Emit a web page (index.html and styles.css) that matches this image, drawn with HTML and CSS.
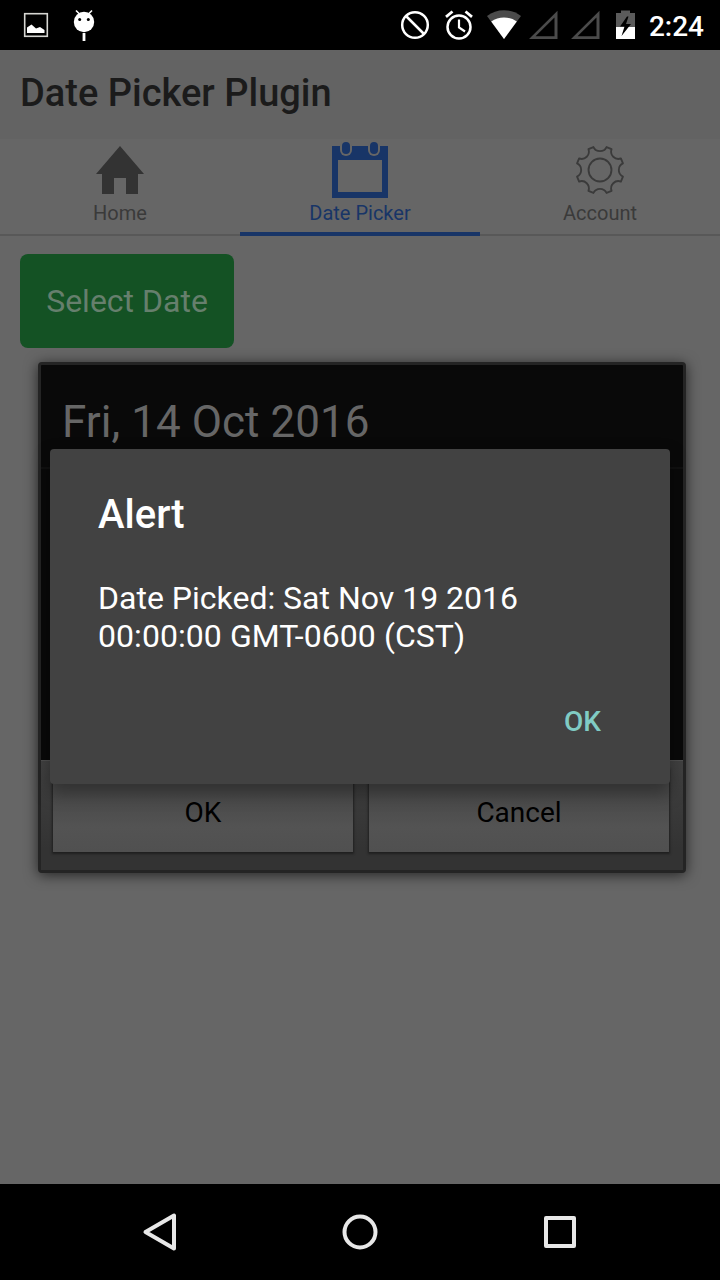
FILE: index.html
```html
<!DOCTYPE html>
<html lang="en">
<head>
<meta charset="utf-8">
<title>Date Picker Plugin</title>
<link rel="stylesheet" href="styles.css">
</head>
<body>
<div class="screen">
  <div class="status">
    <svg class="status-left" width="80" height="50" viewBox="20 0 80 50">
      <rect x="24.7" y="13.7" width="22.6" height="22.6" fill="none" stroke="#d6d6d2" stroke-width="1.6"/>
      <path d="M27 33v-5.500l4.500-3 4.500 4 4-1.500 4.500 3v3z" fill="#fff"/>
      <path d="M76 10.500l4 4M92 10.500l-4 4" stroke="#fff" stroke-width="1.600"/>
      <circle cx="84" cy="22" r="10.200" fill="#fff"/>
      <circle cx="79.700" cy="19.500" r="1.500"/><circle cx="88.300" cy="19.500" r="1.500"/>
      <path d="M84 33v8" stroke="#fff" stroke-width="2.800"/>
    </svg>
    <svg class="status-right" width="240" height="50" viewBox="400 0 240 50">
      <g fill="none" stroke="#fff" stroke-width="2.500">
        <circle cx="415" cy="25" r="12.800"/>
        <path d="M406 16l18 18"/>
        <circle cx="459" cy="27" r="11.500"/>
        <path d="M459 19.500v8l6 4" stroke-width="2.200"/>
        <path d="M446 16.800l6.500-5.300M472 16.800l-6.500-5.300" stroke-width="2.800"/>
      </g>
      <path d="M487 16a28 28 0 0 1 34 0l-17 23z" fill="#4b4b4b"/>
      <path d="M491.200 21.500a22 22 0 0 1 25.600 0L504 39z" fill="#fff"/>
      <path d="M529 39L557.500 10.800V39zM535.500 36.300h19V17.400zM571 39L599.500 10.800V39zM577.500 36.300h19V17.400z" fill="#4b4b4b" fill-rule="evenodd"/>
      <path d="M616 13h5v-2.500h9V13h5v14h-19z" fill="#5b5b5b"/>
      <path d="M616 27h19v12h-19z" fill="#fff"/>
      <path d="M627 16.500l-7 10h4.500l-3 9.500 9.500-12h-5l2.500-7.500z" fill="#000"/>
    </svg>
    <span class="clock">2:24</span>
  </div>
  <header class="header"><h1 class="title">Date Picker Plugin</h1></header>
  <nav class="tabs">
    <div class="tab">
      <svg class="tab-icon" width="60" height="60" viewBox="0 0 60 60"><path d="M30 6L54 34h-6v20H36V38H24v16H12V34H6z" fill="#333"/></svg>
      <span class="tab-label">Home</span>
    </div>
    <div class="tab tab-active">
      <svg class="tab-icon" width="60" height="60" viewBox="0 0 60 60">
        <path d="M2 6h56v52H2zM8 20v32h44V20z" fill="#183567" fill-rule="evenodd"/>
        <rect x="10" y="0" width="12" height="16" rx="6" fill="#666"/><rect x="38" y="0" width="12" height="16" rx="6" fill="#666"/>
        <rect x="12" y="2" width="8" height="12" rx="4" fill="#183567"/><rect x="40" y="2" width="8" height="12" rx="4" fill="#183567"/>
      </svg>
      <span class="tab-label">Date Picker</span>
    </div>
    <div class="tab">
      <svg class="tab-icon" width="60" height="60" viewBox="-29.3 -29.3 58.600 58.600">
        <g fill="none" stroke="#3a3a3a" stroke-width="1.800" stroke-linejoin="round">
          <circle r="11.200"/>
          <path d="M-6.400-22.400A7.100 7.100 0 0 0 6.400-22.400L11.300-20.400A7.100 7.100 0 0 0 20.400-11.300L22.400-6.400A7.100 7.100 0 0 0 22.400 6.400L20.400 11.300A7.100 7.100 0 0 0 11.300 20.400L6.400 22.400A7.100 7.100 0 0 0-6.400 22.400L-11.300 20.400A7.100 7.100 0 0 0-20.400 11.300L-22.400 6.400A7.100 7.100 0 0 0-22.400-6.400L-20.400-11.300A7.100 7.100 0 0 0-11.300-20.400z"/>
        </g>
      </svg>
      <span class="tab-label">Account</span>
    </div>
  </nav>
  <main class="content"><button class="select">Select Date</button></main>
  <footer class="navbar">
    <svg class="nav-icons" width="720" height="96" viewBox="0 0 720 96" fill="none" stroke="#e8e8e8" stroke-width="4" stroke-linejoin="round">
      <path d="M145.500 48L174 31.500v33z"/><circle cx="360" cy="48" r="15.500"/><rect x="546" y="34" width="28" height="28"/>
    </svg>
  </footer>

  <section class="picker">
    <div class="picker-title">Fri, 14 Oct 2016</div>
    <div class="picker-body"></div>
    <div class="picker-actions"><button class="picker-btn">OK</button><button class="picker-btn">Cancel</button></div>
  </section>
  <section class="alert">
    <h2 class="alert-title">Alert</h2>
    <p class="alert-text">Date Picked: Sat Nov 19 2016<br><span class="alert-time">00:00:00 GMT-0600 (CST)</span></p>
    <button class="alert-ok">OK</button>
  </section>
</div>
</body>
</html>
```
FILE: styles.css
```css
* { box-sizing: border-box; margin: 0; padding: 0; }
body { font-family: Roboto, sans-serif; background: #666; }
button { font: inherit; border: 0; }
svg { display: block; }
.screen { position: relative; width: 720px; height: 1280px; display: flex; flex-direction: column; overflow: hidden; background: #666; }
.status { height: 50px; background: #000; display: flex; align-items: center; padding: 0 16px 0 20px; }
.status-right { margin-left: auto; }
.clock { width: 64px; text-align: right; white-space: nowrap; color: #fff; font-size: 28px; font-weight: 500; line-height: 50px; padding-top: 3px; }
.header { height: 89px; background: #636363; padding: 0 20px; }
.title { font-size: 38px; font-weight: 500; line-height: 86px; color: #1b1b1b; white-space: nowrap; }
.tabs { height: 97px; display: flex; border-bottom: 2px solid #585858; }
.tab { flex: 1; height: 97px; display: flex; flex-direction: column; align-items: center; padding-top: 1px; color: #3a3a3a; }
.tab-active { color: #183567; border-bottom: 4px solid #183567; }
.tab-label { font-size: 20px; line-height: 24px; margin-top: 1px; }
.content { flex: 1; padding: 18px 20px; }
.select { display: block; width: 214px; height: 94px; border-radius: 8px; background: #145224; color: #667f6d; font-size: 32px; }
.navbar { height: 96px; background: #000; }
.picker { position: absolute; left: 38px; top: 362px; width: 648px; height: 511px; border: 3px solid #242424; border-radius: 4px; background: #090909; box-shadow: 0 2px 14px rgba(0,0,0,.65); display: flex; flex-direction: column; }
.picker-title { height: 104px; border-bottom: 2px solid #101010; padding-left: 21px; font-size: 44px; line-height: 115px; letter-spacing: .05px; color: #666; }
.picker-body { flex: 1; }
.picker-actions { height: 110px; display: flex; gap: 16px; padding: 8px 14px 18px 12px; background: linear-gradient(#414141, #333 80%); border-top: 1px solid #505050; }
.picker-btn { flex: 1; background: linear-gradient(#484848, #484848 30%, #535353 70%, #505050); box-shadow: 0 1px 2px 1px #202020; color: #000; font-size: 28px; padding-top: 3px; }
.alert { position: absolute; left: 50px; top: 449px; width: 620px; height: 335px; border-radius: 4px; background: #424242; color: #fff; box-shadow: 0 8px 18px rgba(0,0,0,.35); display: flex; flex-direction: column; padding: 42px 48px 0; }
.alert-title { font-size: 40px; font-weight: 500; line-height: 48px; }
.alert-text { margin-top: 40px; font-size: 32px; line-height: 38px; white-space: nowrap; }
.alert-time { letter-spacing: .06px; }
.alert-ok { align-self: flex-end; margin: 50px 21px 0 0; background: none; color: #80cbc4; font-size: 28px; font-weight: 500; line-height: 34px; }
```
